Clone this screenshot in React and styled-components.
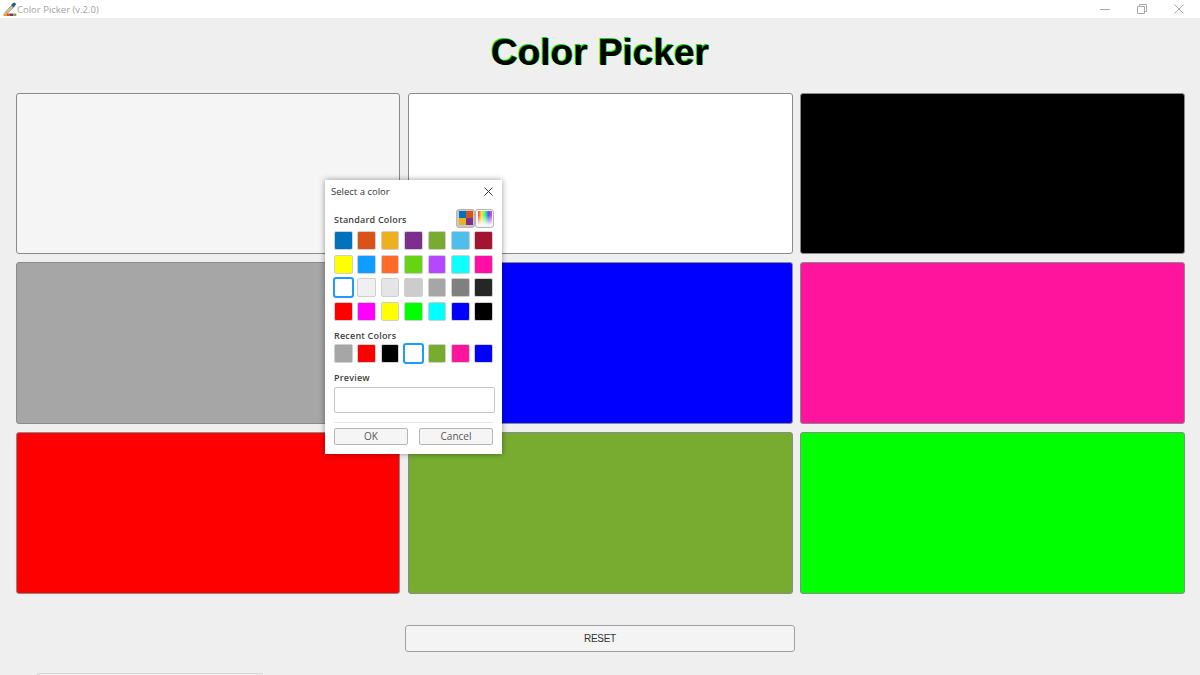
import React from 'react'
import styled, { createGlobalStyle } from 'styled-components'

const STANDARD_COLORS = [
  '#0072bd', '#d95319', '#edb120', '#7e2f8e', '#77ac30', '#4dbeee', '#a2142f',
  '#ffff00', '#0f9dff', '#ff6a29', '#64d413', '#b746ff', '#0fffff', '#ff0fa6',
  '#ffffff', '#f0f0f0', '#e5e5e5', '#cccccc', '#a6a6a6', '#808080', '#262626',
  '#ff0000', '#ff00ff', '#ffff00', '#00ff00', '#00ffff', '#0000ff', '#000000'
]
const RECENT_COLORS = ['#a6a6a6', '#ff0000', '#000000', '#ffffff', '#77ac30', '#ff149e', '#0000ff']
const CARD_COLORS = [
  '#f5f5f5', '#ffffff', '#000000',
  '#a6a6a6', '#0000ff', '#ff149e',
  '#ff0000', '#77ac30', '#00ff00'
]

const App = () => {
  return (
    <Window>
      <GlobalStyle />
      <TitleBar>
        <TitleGroup>
          <svg width="14" height="15" viewBox="0 0 14 15">
            <path d="M2 10.5 L8 4 L10 6 L4 11.5 Z" fill="#d8c8a0" stroke="#7a6a4a" strokeWidth="0.6" />
            <path d="M8 3 L10 1 Q11.5 0 12.6 1.2 Q13.5 2.4 12 4 L10.5 5.8 Z" fill="#2f5f7a" />
            <rect x="0.5" y="11.5" width="3.2" height="2.5" fill="#d9a019" />
            <rect x="3.7" y="11.5" width="3.2" height="2.5" fill="#d95319" />
            <rect x="6.9" y="11.5" width="3.2" height="2.5" fill="#7e2f8e" />
            <rect x="10.1" y="11.5" width="3.2" height="2.5" fill="#77ac30" />
          </svg>
          <WindowTitle>Color Picker (v.2.0)</WindowTitle>
        </TitleGroup>
        <WindowControls>
          <svg width="10" height="10" viewBox="0 0 10 10">
            <path d="M0 5.5 H10" stroke="#a8a8a8" fill="none" />
          </svg>
          <svg width="10" height="10" viewBox="0 0 10 10">
            <path d="M0.5 2.5 H7.5 V9.5 H0.5 Z M2.5 2.5 V0.5 H9.5 V7.5 H7.5" stroke="#a8a8a8" fill="none" />
          </svg>
          <svg width="10" height="10" viewBox="0 0 10 10">
            <path d="M0.5 0.5 L9.5 9.5 M9.5 0.5 L0.5 9.5" stroke="#a8a8a8" fill="none" />
          </svg>
        </WindowControls>
      </TitleBar>

      <Heading>Color Picker</Heading>

      <CardGrid>
        {CARD_COLORS.map((color, i) => (
          <Card key={i} $color={color} />
        ))}
      </CardGrid>

      <ResetRow>
        <ResetButton>RESET</ResetButton>
      </ResetRow>

      <BottomStrip />

      <Dialog>
        <DialogHeader>
          <span>Select a color</span>
          <svg width="9" height="9" viewBox="0 0 9 9">
            <path d="M0.5 0.5 L8.5 8.5 M8.5 0.5 L0.5 8.5" stroke="#333" fill="none" />
          </svg>
        </DialogHeader>
        <SectionHeader>
          <SectionLabel>Standard Colors</SectionLabel>
          <IconButtons>
            <IconButton $active>
              <svg width="14" height="14" viewBox="0 0 12 12">
                <rect width="6" height="6" fill="#0072bd" />
                <rect x="6" width="6" height="6" fill="#d95319" />
                <rect y="6" width="6" height="6" fill="#edb120" />
                <rect x="6" y="6" width="6" height="6" fill="#7e2f8e" />
              </svg>
            </IconButton>
            <IconButton>
              <svg width="14" height="14" viewBox="0 0 12 12">
                <defs>
                  <linearGradient id="hue" x1="0" x2="1" y1="0" y2="0">
                    <stop offset="0" stopColor="#ff4040" />
                    <stop offset="0.25" stopColor="#ffe040" />
                    <stop offset="0.5" stopColor="#40ff80" />
                    <stop offset="0.75" stopColor="#4060ff" />
                    <stop offset="1" stopColor="#ff40c0" />
                  </linearGradient>
                  <linearGradient id="fade" x1="0" x2="0" y1="0" y2="1">
                    <stop offset="0.3" stopColor="#fff" stopOpacity="0" />
                    <stop offset="1" stopColor="#fff" stopOpacity="0.95" />
                  </linearGradient>
                </defs>
                <rect width="12" height="12" fill="url(#hue)" />
                <rect width="12" height="12" fill="url(#fade)" />
              </svg>
            </IconButton>
          </IconButtons>
        </SectionHeader>
        <SwatchGrid>
          {STANDARD_COLORS.map((color, i) => (
            <Swatch key={i} $color={color} $selected={i === 14} />
          ))}
        </SwatchGrid>
        <RecentLabel>Recent Colors</RecentLabel>
        <RecentRow>
          {RECENT_COLORS.map((color, i) => (
            <Swatch key={i} $color={color} $selected={i === 3} />
          ))}
        </RecentRow>
        <PreviewLabel>Preview</PreviewLabel>
        <PreviewBox />
        <Divider />
        <DialogButtons>
          <DialogButton>OK</DialogButton>
          <DialogButton>Cancel</DialogButton>
        </DialogButtons>
      </Dialog>
    </Window>
  )
}

const GlobalStyle = createGlobalStyle`
  html, body {
    margin: 0;
    padding: 0;
    background: #efefef;
  }
  * {
    box-sizing: border-box;
  }
`

const Window = styled.div`
  position: relative;
  display: flex;
  flex-direction: column;
  width: 1200px;
  height: 675px;
  overflow: hidden;
  background: #efefef;
  font-family: 'Liberation Sans', Arial, sans-serif;
`

const TitleBar = styled.div`
  display: flex;
  justify-content: space-between;
  align-items: center;
  height: 18px;
  padding: 0 16px 0 3px;
  background: #ffffff;
`

const TitleGroup = styled.div`
  display: flex;
  align-items: center;
`

const WindowTitle = styled.span`
  font-family: 'Open Sans', sans-serif;
  font-size: 9.5px;
  color: #a3a3a3;
`

const WindowControls = styled.div`
  display: flex;
  align-items: center;
  gap: 27px;
`

const Heading = styled.h1`
  margin: 15px 0 0;
  height: 60px;
  font-size: 37px;
  line-height: 40px;
  font-weight: 700;
  text-align: center;
  color: #000000;
  text-shadow: -1px -1px 0 #00e000, 0.5px 0 0 #00e000;
`

const CardGrid = styled.div`
  display: grid;
  grid-template-columns: 384.4px 384.9px 384.8px;
  grid-template-rows: 161px 162px 162px;
  gap: 8px 7.5px;
  padding-left: 16px;
`

const Card = styled.div`
  border: 1px solid #8a8a8a;
  border-radius: 3px;
  background: ${(props) => props.$color};
`

const ResetRow = styled.div`
  display: flex;
  justify-content: center;
  margin-top: 31px;
`

const ResetButton = styled.button`
  width: 390px;
  height: 27px;
  padding: 0;
  border: 1px solid #a0a0a0;
  border-radius: 3px;
  background: #f4f4f4;
  font-family: 'Liberation Sans', Arial, sans-serif;
  font-size: 10px;
  letter-spacing: -0.3px;
  color: #333333;
`

const BottomStrip = styled.div`
  position: absolute;
  left: 37px;
  bottom: -4px;
  width: 226px;
  height: 6px;
  border: 1px solid #d8d8d8;
  border-radius: 2px;
  background: #f2f2f2;
`

const Dialog = styled.div`
  position: absolute;
  left: 325px;
  top: 180px;
  display: flex;
  flex-direction: column;
  width: 177px;
  height: 274px;
  padding: 0 8px 0 9px;
  background: #ffffff;
  box-shadow: 0 0 6px rgba(0, 0, 0, 0.4);
  font-family: 'Open Sans', sans-serif;
  color: #404040;
`

const DialogHeader = styled.div`
  display: flex;
  justify-content: space-between;
  align-items: center;
  height: 23px;
  margin: 0 1px 0 -3px;
  font-size: 9.5px;
  color: #333333;
`

const SectionHeader = styled.div`
  display: flex;
  justify-content: space-between;
  align-items: center;
  height: 22px;
  margin-top: 4px;
`

const SectionLabel = styled.span`
  margin-top: 2px;
  font-size: 9px;
  font-weight: 600;
  letter-spacing: 0.2px;
`

const IconButtons = styled.div`
  display: flex;
`

const IconButton = styled.div`
  display: flex;
  align-items: center;
  justify-content: center;
  width: 19px;
  height: 19px;
  border: 1px solid #b5b5b5;
  border-radius: 3px;
  background: ${(props) => (props.$active ? '#c8c8c8' : '#f5f5f5')};
`

const SwatchGrid = styled.div`
  display: grid;
  grid-template-columns: repeat(7, 18.7px);
  gap: 4.6px 4.7px;
  margin-top: 2px;
`

const Swatch = styled.div`
  height: 19px;
  border: 1px solid #cfcfcf;
  border-radius: 2px;
  background: ${(props) => props.$color};
  ${(props) =>
    props.$selected &&
    `
    outline: 2px solid #1e9bff;
    outline-offset: -1px;
  `}
`

const RecentLabel = styled.div`
  margin-top: 8px;
  height: 14px;
  line-height: 14px;
  font-size: 9px;
  font-weight: 600;
  letter-spacing: 0.2px;
`

const RecentRow = styled.div`
  display: grid;
  grid-template-columns: repeat(7, 18.7px);
  column-gap: 4.7px;
  margin-top: 1px;
`

const PreviewLabel = styled.div`
  margin-top: 8px;
  height: 14px;
  line-height: 14px;
  font-size: 9px;
  font-weight: 600;
  letter-spacing: 0.2px;
`

const PreviewBox = styled.div`
  width: 161px;
  height: 25.5px;
  margin-top: 2.5px;
  border: 1px solid #c4c4c4;
  border-radius: 2px;
  background: #ffffff;
`

const Divider = styled.div`
  height: 1px;
  margin-top: 9px;
  background: #e8e8e8;
`

const DialogButtons = styled.div`
  display: flex;
  justify-content: space-between;
  margin-top: 5px;
  padding-right: 1px;
`

const DialogButton = styled.button`
  width: 74px;
  height: 17px;
  padding: 0;
  border: 1px solid #b5b5b5;
  border-radius: 2px;
  background: #f5f5f5;
  font-family: 'Open Sans', sans-serif;
  font-size: 10px;
  color: #555555;
`

export default App
